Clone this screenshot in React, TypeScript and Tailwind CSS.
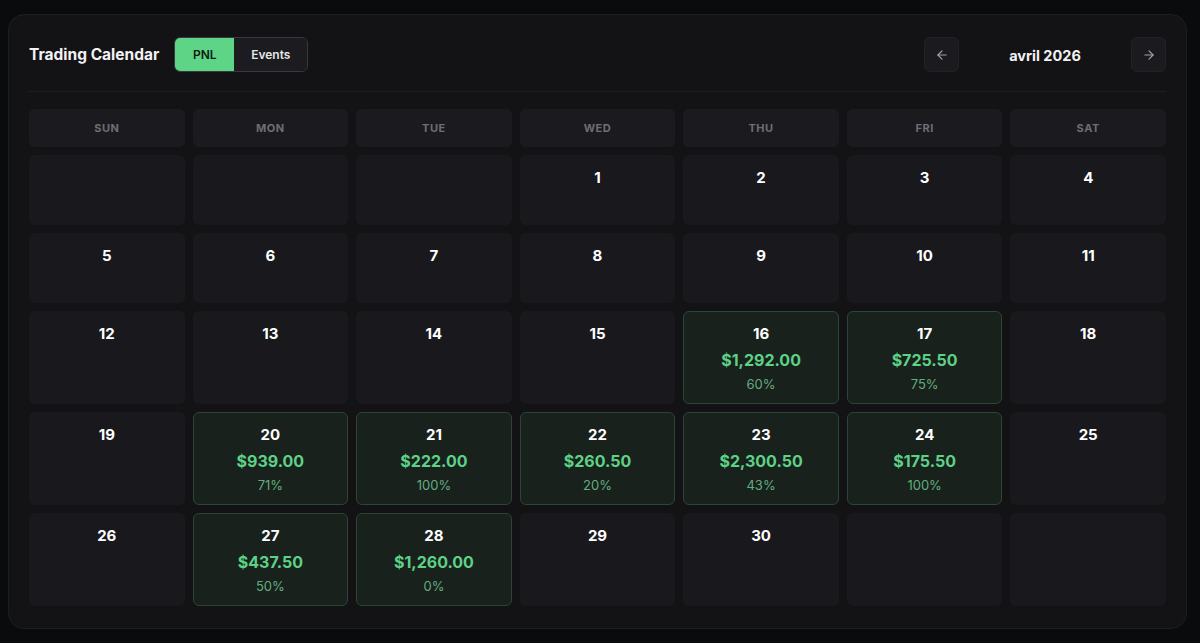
import { ArrowLeft, ArrowRight } from "lucide-react";

type Day = { n: number; pnl?: string; pct?: string } | null;

const weekDays = ["SUN", "MON", "TUE", "WED", "THU", "FRI", "SAT"];

// april 2026 starts on a wednesday
const trades: Record<number, { pnl: string; pct: string }> = {
  16: { pnl: "$1,292.00", pct: "60%" },
  17: { pnl: "$725.50", pct: "75%" },
  20: { pnl: "$939.00", pct: "71%" },
  21: { pnl: "$222.00", pct: "100%" },
  22: { pnl: "$260.50", pct: "20%" },
  23: { pnl: "$2,300.50", pct: "43%" },
  24: { pnl: "$175.50", pct: "100%" },
  27: { pnl: "$437.50", pct: "50%" },
  28: { pnl: "$1,260.00", pct: "0%" },
};

const buildDays = (): Day[] => {
  let days: Day[] = [null, null, null];
  for (let i = 1; i <= 30; i++) {
    days.push({ n: i, ...trades[i] });
  }
  while (days.length % 7 !== 0) days.push(null);
  return days;
};

const DayCell = ({ day }: { day: Day }) => {
  if (!day) {
    return <div className="min-h-[70px] rounded-md bg-[#19191d]" />;
  }
  if (day.pnl) {
    return (
      <div className="flex flex-col items-center rounded-md border border-[#2c4534] bg-[#19211d] pt-3 pb-[10px]">
        <span className="text-[15px] font-bold leading-5 text-white">{day.n}</span>
        <span className="mt-[5px] text-[16px] font-bold leading-[22px] text-[#5dd286]">
          {day.pnl}
        </span>
        <span className="mt-1 text-[13px] leading-[18px] text-[#62ad7d]">{day.pct}</span>
      </div>
    );
  }
  return (
    <div className="flex min-h-[70px] flex-col items-center rounded-md bg-[#19191d] pt-[13px]">
      <span className="text-[15px] font-bold leading-5 text-white">{day.n}</span>
    </div>
  );
};

const App = () => {
  const days = buildDays();
  return (
    <div
      className="min-h-[643px] w-[1200px] bg-[#0a0b0d] pt-[14px] pl-2"
      style={{ fontFamily: "Inter, 'Liberation Sans', sans-serif" }}
    >
      <div className="w-[1179px] rounded-2xl border border-[#1e1e22] bg-[#131316] px-[20px] pt-[22px] pb-[22px]">
        {/* header */}
        <div className="flex h-[35px] items-center justify-between">
          <div className="flex items-center gap-[15px]">
            <h2 className="text-[15.5px] font-bold text-[#f2f2f3]">Trading Calendar</h2>
            <div className="flex h-[35px] overflow-hidden rounded-md border border-[#38383d]">
              <button className="w-[59px] bg-[#5ed487] text-[12px] font-semibold text-[#0b1a10]">
                PNL
              </button>
              <button className="w-[73px] bg-[#1c1c20] text-[12px] font-semibold text-[#e6e6e8]">
                Events
              </button>
            </div>
          </div>
          <div className="flex items-center">
            <button className="flex h-[35px] w-[35px] items-center justify-center rounded-md border border-[#222226] bg-[#1b1b1f] text-[#a3a3a8]">
              <ArrowLeft size={14} strokeWidth={2} />
            </button>
            <div className="w-[172px] pt-[2px] text-center text-[14.5px] font-bold text-[#f2f2f3]">
              avril 2026
            </div>
            <button className="flex h-[35px] w-[35px] items-center justify-center rounded-md border border-[#222226] bg-[#1b1b1f] text-[#a3a3a8]">
              <ArrowRight size={14} strokeWidth={2} />
            </button>
          </div>
        </div>
        <div className="mt-[19px] h-px bg-[#1f1f23]" />

        {/* week day labels */}
        <div className="mt-[17px] grid grid-cols-7 gap-2">
          {weekDays.map((d) => (
            <div
              key={d}
              className="flex h-[38px] items-center justify-center rounded-md bg-[#1b1b1f] text-[11px] font-bold tracking-wider text-[#6e6e74]"
            >
              {d}
            </div>
          ))}
        </div>

        {/* days */}
        <div className="mt-2 grid grid-cols-7 gap-2">
          {days.map((d, index) => (
            <DayCell key={index} day={d} />
          ))}
        </div>
      </div>
    </div>
  );
};

export default App;
